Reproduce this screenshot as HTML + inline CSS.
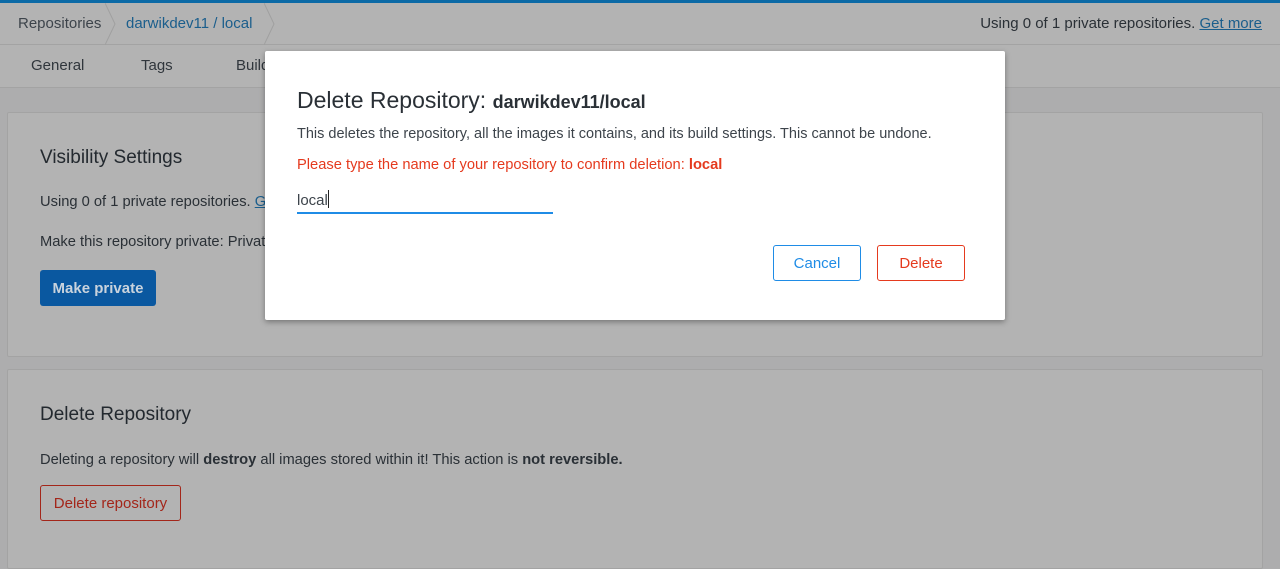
<!DOCTYPE html>
<html><head><meta charset="utf-8"><style>
*{box-sizing:border-box;margin:0;padding:0}
body{width:1280px;height:552px;overflow:hidden;background:#adadae;font-family:"Liberation Sans",sans-serif;color:#2a3036;position:relative;font-size:14px}
.top{height:3px;background:#0c6aa6}
.crumb{height:42px;background:#b3b3b3;border-bottom:1px solid #a3a3a3;position:relative}
.crumb span{position:absolute;top:12px;font-size:15px}
.tabs{height:43px;background:#b3b3b3;border-bottom:1px solid #a3a3a3;position:relative}
.tabs span{position:absolute;top:12px;font-size:15px;color:#30363c}
.panel{position:absolute;left:7px;width:1256px;background:#b3b3b3;border:1px solid #a3a3a3;border-radius:2px}
.panel h2{position:absolute;left:32px;font-size:19px;font-weight:normal;color:#23292f}
.panel p{position:absolute;left:32px;font-size:14.7px;color:#2a3036}
.modal{position:absolute;left:265px;top:51px;width:740px;height:269px;background:#fff;box-shadow:0 2px 6px rgba(0,0,0,.35);border-radius:2px}
.btn{position:absolute;height:36px;border-radius:3px;font-size:15px;text-align:center;line-height:36px}
</style></head><body>
<div class="top"></div>
<div class="crumb">
<span style="left:18px;color:#3d444b">Repositories</span>
<svg style="position:absolute;left:105px;top:0" width="12" height="42"><path d="M0 0 L10 21 L0 42" stroke="#a0a0a0" fill="none"/></svg>
<span style="left:126px;color:#1b5e8c">darwikdev11 / local</span>
<svg style="position:absolute;left:264px;top:0" width="12" height="42"><path d="M0 0 L10 21 L0 42" stroke="#a0a0a0" fill="none"/></svg>
<span style="right:18px;color:#2a3036">Using 0 of 1 private repositories. <u style="color:#1b5e8c">Get more</u></span>
</div>
<div class="tabs">
<span style="left:31px">General</span><span style="left:141px">Tags</span><span style="left:236px">Builds</span>
</div>
<div class="panel" style="top:112px;height:245px">
<h2 style="top:34px">Visibility Settings</h2>
<p style="top:81px">Using 0 of 1 private repositories. <u style="color:#1b5e8c">Get more</u></p>
<p style="top:121px">Make this repository private: Private</p>
<div class="btn" style="left:32px;top:157px;width:116px;background:#0a58a0;color:#c9d3dd;font-weight:bold;line-height:38px">Make private</div>
</div>
<div class="panel" style="top:369px;height:200px">
<h2 style="top:34px">Delete Repository</h2>
<p style="top:82px">Deleting a repository will <b>destroy</b> all images stored within it! This action is <b>not reversible.</b></p>
<div class="btn" style="left:32px;top:115px;width:141px;border:1px solid #a3261a;color:#a3261a">Delete repository</div>
</div>
<div class="modal">
<div style="position:absolute;left:32px;top:36px;font-size:23px;color:#2a3036">Delete Repository: <b style="font-size:18px">darwikdev11/local</b></div>
<div style="position:absolute;left:32px;top:75px;font-size:14.5px;color:#3d444b">This deletes the repository, all the images it contains, and its build settings. This cannot be undone.</div>
<div style="position:absolute;left:32px;top:106px;font-size:14.7px;color:#e53a1e">Please type the name of your repository to confirm deletion: <b>local</b></div>
<div style="position:absolute;left:32px;top:139px;font-size:15px;color:#3d444b">local<span style="display:inline-block;width:1px;height:18px;background:#222;vertical-align:-3px"></span></div>
<div style="position:absolute;left:32px;top:161px;width:256px;height:2px;background:#1f8ce6"></div>
<div class="btn" style="left:508px;top:194px;width:88px;border:1px solid #1f8ce6;color:#1f8ce6">Cancel</div>
<div class="btn" style="left:612px;top:194px;width:88px;border:1px solid #e53a1e;color:#e53a1e">Delete</div>
</div>
</body></html>
